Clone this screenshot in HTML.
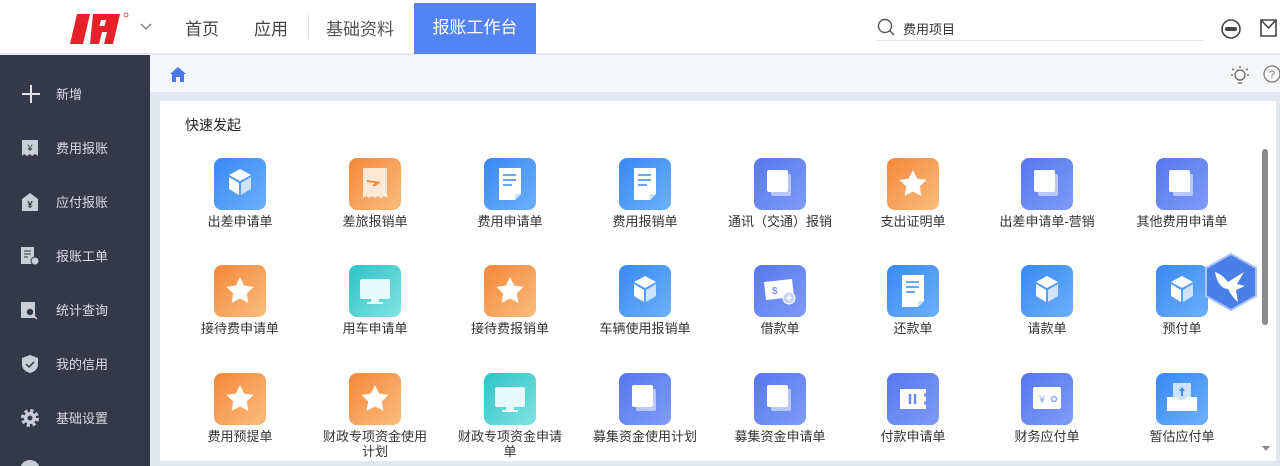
<!DOCTYPE html>
<html><head><meta charset="utf-8">
<style>
*{margin:0;padding:0;box-sizing:border-box}
html,body{width:1280px;height:466px;overflow:hidden}
body{background:#e3e7ef;font-family:"Liberation Sans","Noto Sans CJK SC",sans-serif;position:relative}
.top{position:absolute;left:0;top:0;width:1280px;height:54px;background:#fff;border-bottom:1px solid #e6e8ee}
.nav{position:absolute;top:15px;font-size:17px;color:#444}
.act{position:absolute;left:414px;top:3px;width:122px;height:51px;background:#5384f2;color:#fff;font-size:17px;line-height:49px;text-align:center}
.side{position:absolute;left:0;top:55px;width:150px;height:411px;background:#343849;overflow:hidden}
.si{position:absolute;left:0;width:150px;height:20px;color:#d8dbe3;font-size:13px}
.si span{position:absolute;left:56px;top:0}
.si svg{position:absolute;left:20px;top:0}
.crumb{position:absolute;left:150px;top:55px;width:1130px;height:37px;background:#f5f6f8}
.card{position:absolute;left:160px;top:101px;width:1116px;height:360px;background:#fff;border-radius:2px}
.it{position:absolute;width:134px;text-align:center;font-size:13px;color:#333;line-height:15px}
.it .ic{width:52px;height:52px;border-radius:8px;margin:0 auto 4px;position:relative}
.b{background:linear-gradient(135deg,#3889f3,#6db0fb)}
.o{background:linear-gradient(135deg,#f5873a,#f9bd7d)}
.p{background:linear-gradient(135deg,#5677ee,#7f9cf7)}
.t{background:linear-gradient(135deg,#2cc4c6,#82e2e2)}
.ic svg{position:absolute;left:0;top:0}
</style></head><body>
<div class="top">
  <svg style="position:absolute;left:68px;top:10px" width="64" height="36" viewBox="0 0 64 36"><path d="M9 4h13l-7 30H2z M25 4h27l-7 30h-9l3-12h-5l-3 12h-9z M33 10l-1.5 6h5l1.5-6z" fill="#e8202a"/><circle cx="58" cy="5" r="2" fill="none" stroke="#e8202a" stroke-width=".7"/></svg>
  <svg style="position:absolute;left:140px;top:23px" width="12" height="8"><path d="M1 1l5 5 5-5" stroke="#777" fill="none" stroke-width="1.3"/></svg>
  <div class="nav" style="left:185px">首页</div>
  <div class="nav" style="left:254px">应用</div>
  <div style="position:absolute;left:308px;top:15px;width:1px;height:24px;background:#ddd"></div>
  <div class="nav" style="left:326px;color:#555">基础资料</div>
  <div class="act">报账工作台</div>
  <svg style="position:absolute;left:877px;top:18px" width="18" height="18"><circle cx="8" cy="8" r="6.5" fill="none" stroke="#555" stroke-width="1.4"/><path d="M13 13l4 4" stroke="#555" stroke-width="1.5"/></svg>
  <div style="position:absolute;left:903px;top:19px;font-size:13px;color:#333">费用项目</div>
  <div style="position:absolute;left:877px;top:40px;width:326px;height:1px;background:#e6e6e6"></div>
  <svg style="position:absolute;left:1220px;top:18px" width="22" height="22"><circle cx="11" cy="11" r="9" fill="none" stroke="#444" stroke-width="1.6"/><rect x="5" y="9" width="12" height="4" rx="2" fill="#444"/></svg>
  <svg style="position:absolute;left:1258px;top:17px" width="22" height="22"><path d="M3 3h15v16H3z M3 3l7.5 8 7.5-8" fill="none" stroke="#444" stroke-width="1.6"/></svg>
</div>
<div class="side">
  <div class="si" style="top:29px"><svg width="22" height="20"><path d="M11 1v18M2 10h18" stroke="#e0e3ea" stroke-width="2"/></svg><span>新增</span></div>
  <div class="si" style="top:83px"><svg width="20" height="20"><path d="M2 2h16v16l-3-2-3 2-2-2-3 2-3-2-2 2z" fill="#c9cdd8"/><text x="10" y="13" font-size="9" text-anchor="middle" fill="#343849">¥</text></svg><span>费用报账</span></div>
  <div class="si" style="top:137px"><svg width="20" height="20"><path d="M10 1l8 6v12H2V7z" fill="#c9cdd8"/><text x="10" y="16" font-size="10" text-anchor="middle" fill="#343849" font-weight="bold">¥</text></svg><span>应付报账</span></div>
  <div class="si" style="top:191px"><svg width="20" height="20"><rect x="1" y="1" width="13" height="17" fill="#c9cdd8"/><path d="M4 5h7M4 8h7M4 11h4" stroke="#343849"/><circle cx="15" cy="15" r="4" fill="#c9cdd8" stroke="#343849"/></svg><span>报账工单</span></div>
  <div class="si" style="top:245px"><svg width="20" height="20"><rect x="1" y="2" width="14" height="16" fill="#c9cdd8"/><circle cx="10" cy="12" r="4" fill="#343849" stroke="#c9cdd8" stroke-width="1.5"/><path d="M13 15l4 4" stroke="#c9cdd8" stroke-width="1.5"/></svg><span>统计查询</span></div>
  <div class="si" style="top:299px"><svg width="20" height="20"><path d="M10 1l8 3v7c0 4-4 7-8 8-4-1-8-4-8-8V4z" fill="#c9cdd8"/><path d="M6 10l3 3 5-5" stroke="#343849" fill="none" stroke-width="1.5"/></svg><span>我的信用</span></div>
  <div class="si" style="top:353px"><svg width="20" height="20"><circle cx="10" cy="10" r="7" fill="none" stroke="#c9cdd8" stroke-width="4" stroke-dasharray="3 2.5"/><circle cx="10" cy="10" r="6" fill="#c9cdd8"/><circle cx="10" cy="10" r="2.5" fill="#343849"/></svg><span>基础设置</span></div>
  <div style="position:absolute;left:20px;top:405px;width:20px;height:20px;border-radius:50%;background:#c9cdd8"></div>
</div>
<div class="crumb">
  <svg style="position:absolute;left:19px;top:11px" width="18" height="17"><path d="M9 1l8 7h-2v8h-4v-5H7v5H3V8H1z" fill="#4a78e8"/></svg>
  <svg style="position:absolute;left:1079px;top:9px" width="22" height="22"><circle cx="11" cy="11" r="5" fill="none" stroke="#666" stroke-width="1.3"/><path d="M9 16h4M9 19h4M11 2v2M3 5l2 1M19 5l-2 1M2 11h2M18 11h2" stroke="#666" stroke-width="1.3"/></svg>
  <svg style="position:absolute;left:1112px;top:9px" width="20" height="20"><circle cx="10" cy="10" r="8" fill="none" stroke="#777" stroke-width="1.2"/><text x="10" y="14" font-size="11" text-anchor="middle" fill="#777">?</text></svg>
</div>
<div class="card">
  <div style="position:absolute;left:25px;top:14px;font-size:14px;color:#222">快速发起</div>
  <div style="position:absolute;left:1102px;top:48px;width:6px;height:176px;background:#8a8a8a;border-radius:3px"></div>
  <svg style="position:absolute;left:1102px;top:345px" width="8" height="6"><path d="M0 0h8L4 5z" fill="#888"/></svg>
</div>
<svg width="0" height="0" style="position:absolute">
<defs>
<g id="cube"><path d="M26 11l11 6-11 6-11-6z" fill="#fff"/><path d="M15 19l10 6v12l-10-6z" fill="#fff"/><path d="M27 25l10-6v12l-10 6z" fill="#cfe3ff"/></g>
<g id="doc"><path d="M15 10h22v26l-6 6H15z" fill="#fff"/><path d="M31 42l6-6h-6z" fill="#cfe3ff"/><path d="M19 17h13M19 22h13M19 27h9" stroke="#6aa7f8" stroke-width="2"/></g>
<g id="star"><path d="M26 12l4.2 8.6 9.4 1.3-6.8 6.6 1.6 9.4L26 33.5l-8.4 4.4 1.6-9.4-6.8-6.6 9.4-1.3z" fill="#fff"/></g>
<g id="sq"><rect x="17" y="16" width="20" height="22" rx="2" fill="#b9c8fb"/><rect x="13" y="12" width="21" height="22" rx="2" fill="#fff"/></g>
<g id="mon"><rect x="11" y="14" width="30" height="20" rx="2" fill="#e8fbfb"/><rect x="22" y="34" width="8" height="3" fill="#e8fbfb"/><rect x="18" y="37" width="16" height="2" fill="#e8fbfb"/></g>
<g id="plane"><path d="M14 10h24v30l-3-2-3 2-3-2-3 2-3-2-3 2-3-2-3 2z" fill="#fde8d6"/><path d="M18 22l14 2-6 4h-3l3-3-8-1z" fill="#f5893a"/></g>
<g id="money"><path d="M10 17l28-3 2 18-28 3z" fill="#fff"/><text x="18" y="29" font-size="10" font-weight="bold" fill="#7d97f5">$</text><circle cx="35" cy="33" r="6" fill="#c7d3fb" stroke="#fff"/><path d="M35 30v6M32 33h6" stroke="#fff" stroke-width="1.5"/></g>
<g id="tick"><path d="M13 16h26v4a2 2 0 000 4v4a2 2 0 000 4v4H13z" fill="#fff"/><path d="M23 21v10M28 21v10" stroke="#6b87f2" stroke-width="2.5"/></g>
<g id="wal"><rect x="12" y="14" width="28" height="22" rx="2" fill="#fff"/><text x="18" y="30" font-size="11" fill="#8ea5f7">¥</text><circle cx="33" cy="26" r="2.5" fill="none" stroke="#8ea5f7" stroke-width="1.5"/></g>
<g id="tray"><rect x="17" y="10" width="18" height="18" fill="#cfe3ff"/><path d="M26 14l-3 4h2v5h2v-5h2z" fill="#3b8bf4"/><path d="M11 24h10l2 3h6l2-3h10v14H11z" fill="#fff"/></g>
</defs></svg>
<!-- row 1 -->
<div class="it" style="left:173px;top:158px"><div class="ic b"><svg width="52" height="52"><use href="#cube"/></svg></div>出差申请单</div>
<div class="it" style="left:308px;top:158px"><div class="ic o"><svg width="52" height="52"><use href="#plane"/></svg></div>差旅报销单</div>
<div class="it" style="left:443px;top:158px"><div class="ic b"><svg width="52" height="52"><use href="#doc"/></svg></div>费用申请单</div>
<div class="it" style="left:578px;top:158px"><div class="ic b"><svg width="52" height="52"><use href="#doc"/></svg></div>费用报销单</div>
<div class="it" style="left:713px;top:158px"><div class="ic p"><svg width="52" height="52"><use href="#sq"/></svg></div>通讯（交通）报销</div>
<div class="it" style="left:846px;top:158px"><div class="ic o"><svg width="52" height="52"><use href="#star"/></svg></div>支出证明单</div>
<div class="it" style="left:980px;top:158px"><div class="ic p"><svg width="52" height="52"><use href="#sq"/></svg></div>出差申请单-营销</div>
<div class="it" style="left:1115px;top:158px"><div class="ic p"><svg width="52" height="52"><use href="#sq"/></svg></div>其他费用申请单</div>
<!-- row 2 -->
<div class="it" style="left:173px;top:265px"><div class="ic o"><svg width="52" height="52"><use href="#star"/></svg></div>接待费申请单</div>
<div class="it" style="left:308px;top:265px"><div class="ic t"><svg width="52" height="52"><use href="#mon"/></svg></div>用车申请单</div>
<div class="it" style="left:443px;top:265px"><div class="ic o"><svg width="52" height="52"><use href="#star"/></svg></div>接待费报销单</div>
<div class="it" style="left:578px;top:265px"><div class="ic b"><svg width="52" height="52"><use href="#cube"/></svg></div>车辆使用报销单</div>
<div class="it" style="left:713px;top:265px"><div class="ic p"><svg width="52" height="52"><use href="#money"/></svg></div>借款单</div>
<div class="it" style="left:846px;top:265px"><div class="ic b"><svg width="52" height="52"><use href="#doc"/></svg></div>还款单</div>
<div class="it" style="left:980px;top:265px"><div class="ic b"><svg width="52" height="52"><use href="#cube"/></svg></div>请款单</div>
<div class="it" style="left:1115px;top:265px"><div class="ic b"><svg width="52" height="52"><use href="#cube"/></svg></div>预付单</div>
<!-- row 3 -->
<div class="it" style="left:173px;top:373px"><div class="ic o"><svg width="52" height="52"><use href="#star"/></svg></div>费用预提单</div>
<div class="it" style="left:308px;top:373px;padding:0 10px"><div class="ic o"><svg width="52" height="52"><use href="#star"/></svg></div>财政专项资金使用计划</div>
<div class="it" style="left:443px;top:373px;padding:0 10px"><div class="ic t"><svg width="52" height="52"><use href="#mon"/></svg></div>财政专项资金申请单</div>
<div class="it" style="left:578px;top:373px"><div class="ic p"><svg width="52" height="52"><use href="#sq"/></svg></div>募集资金使用计划</div>
<div class="it" style="left:713px;top:373px"><div class="ic p"><svg width="52" height="52"><use href="#sq"/></svg></div>募集资金申请单</div>
<div class="it" style="left:846px;top:373px"><div class="ic p"><svg width="52" height="52"><use href="#tick"/></svg></div>付款申请单</div>
<div class="it" style="left:980px;top:373px"><div class="ic p"><svg width="52" height="52"><use href="#wal"/></svg></div>财务应付单</div>
<div class="it" style="left:1115px;top:373px"><div class="ic b"><svg width="52" height="52"><use href="#tray"/></svg></div>暂估应付单</div>
<!-- floating bird -->
<svg style="position:absolute;left:1203px;top:252px" width="56" height="60" viewBox="0 0 56 60"><path d="M28 2l25 14v28L28 58 3 44V16z" fill="#4a7fe8" stroke="#a9c3f7" stroke-width="2"/><path d="M12 20c6 2 10 6 13 10l16-10-7 12 8 2-9 4 2 12c-5-4-8-9-10-13-6 0-11-6-13-17z" fill="#fff"/></svg>
</body></html>
